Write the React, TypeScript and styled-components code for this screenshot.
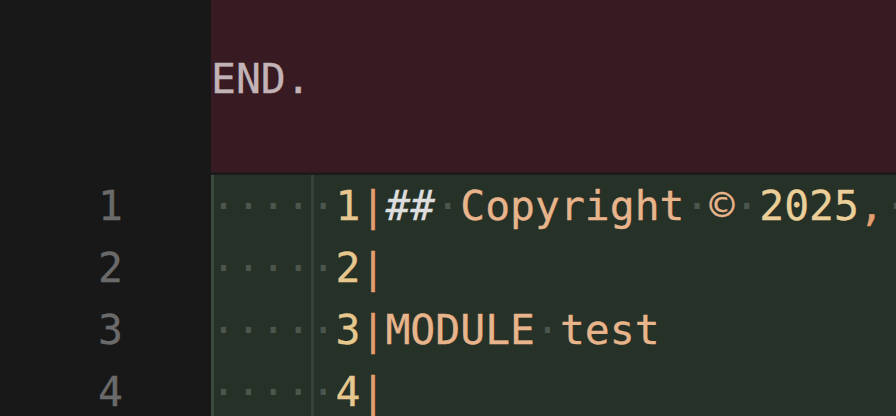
import React from "react";
import styled, { createGlobalStyle } from "styled-components";

const Global = createGlobalStyle`
  html, body { margin: 0; padding: 0; background: #181818; overflow: hidden; }
  #root { width: 896px; height: 416px; overflow: hidden; }
`;

const Viewport = styled.div`
  width: 896px;
  height: 416px;
  overflow: hidden;
  background: #181818;
  font-family: "DejaVu Sans Mono", "Liberation Mono", monospace;
  font-size: 41.4px;
  line-height: 62px;
  -webkit-text-stroke: 0.3px currentColor;
`;

const Scroll = styled.div`
  display: flex;
  flex-direction: column;
  margin-top: -14px;
`;

const Hunk = styled.div`
  display: flex;
  flex-direction: column;
`;

const Row = styled.div`
  display: grid;
  grid-template-columns: 211px 1fr;
  height: 62px;
`;

const Gutter = styled.div`
  background: #181818;
  color: #6a6a6a;
  text-align: right;
  padding-right: 88px;
  white-space: pre;
`;

const Code = styled.div<{ $kind: "del" | "add" }>`
  white-space: pre;
  overflow: hidden;
  background-color: ${(p) => (p.$kind === "del" ? "#381b22" : "#263128")};
  color: ${(p) => (p.$kind === "del" ? "#c2b3b7" : "#e8b48b")};
  ${(p) =>
    p.$kind === "add"
      ? `
    box-shadow: inset 3px 0 0 #3c4b3f;
    background-image: linear-gradient(to right, transparent 100px, #35433a 100px, #35433a 103px, transparent 103px);
  `
      : ""}
`;

const Separator = styled.div`
  display: grid;
  grid-template-columns: 211px 1fr;
  height: 3px;
  & > div:last-child { background: #1f1b1c; }
`;

const Ws = styled.span`
  color: #4c554e;
  -webkit-text-stroke: 0;
`;

const Num = styled.span`
  color: #e6c88f;
`;

const Bar = styled.span`
  color: #e39f6f;
`;

const Hash = styled.span`
  color: #dedede;
  font-style: italic;
`;

const Word = styled.span`
  color: #e8b48b;
`;

const Year = styled.span`
  color: #ebcf98;
`;

const Punct = styled.span`
  color: #e39f6f;
`;

const dots = (n: number) => <Ws>{"·".repeat(n)}</Ws>;

const deleted = ["", "END.", ""];

const added: React.ReactNode[] = [
  <>
    {dots(5)}
    <Num>1</Num>
    <Bar>|</Bar>
    <Hash>##</Hash>
    {dots(1)}
    <Word>Copyright</Word>
    {dots(1)}
    <Word>©</Word>
    {dots(1)}
    <Year>2025</Year>
    <Punct>,</Punct>
    {dots(1)}
  </>,
  <>
    {dots(5)}
    <Num>2</Num>
    <Bar>|</Bar>
  </>,
  <>
    {dots(5)}
    <Num>3</Num>
    <Bar>|</Bar>
    <Word>MODULE</Word>
    {dots(1)}
    <Word>test</Word>
  </>,
  <>
    {dots(5)}
    <Num>4</Num>
    <Bar>|</Bar>
  </>,
];

export default function App() {
  return (
    <>
      <Global />
      <Viewport>
        <Scroll>
          <Hunk>
            {deleted.map((t, i) => (
              <Row key={i}>
                <Gutter />
                <Code $kind="del">{t}</Code>
              </Row>
            ))}
          </Hunk>
          <Separator>
            <div />
            <div />
          </Separator>
          <Hunk>
            {added.map((c, i) => (
              <Row key={i}>
                <Gutter>{i + 1}</Gutter>
                <Code $kind="add">{c}</Code>
              </Row>
            ))}
          </Hunk>
        </Scroll>
      </Viewport>
    </>
  );
}
